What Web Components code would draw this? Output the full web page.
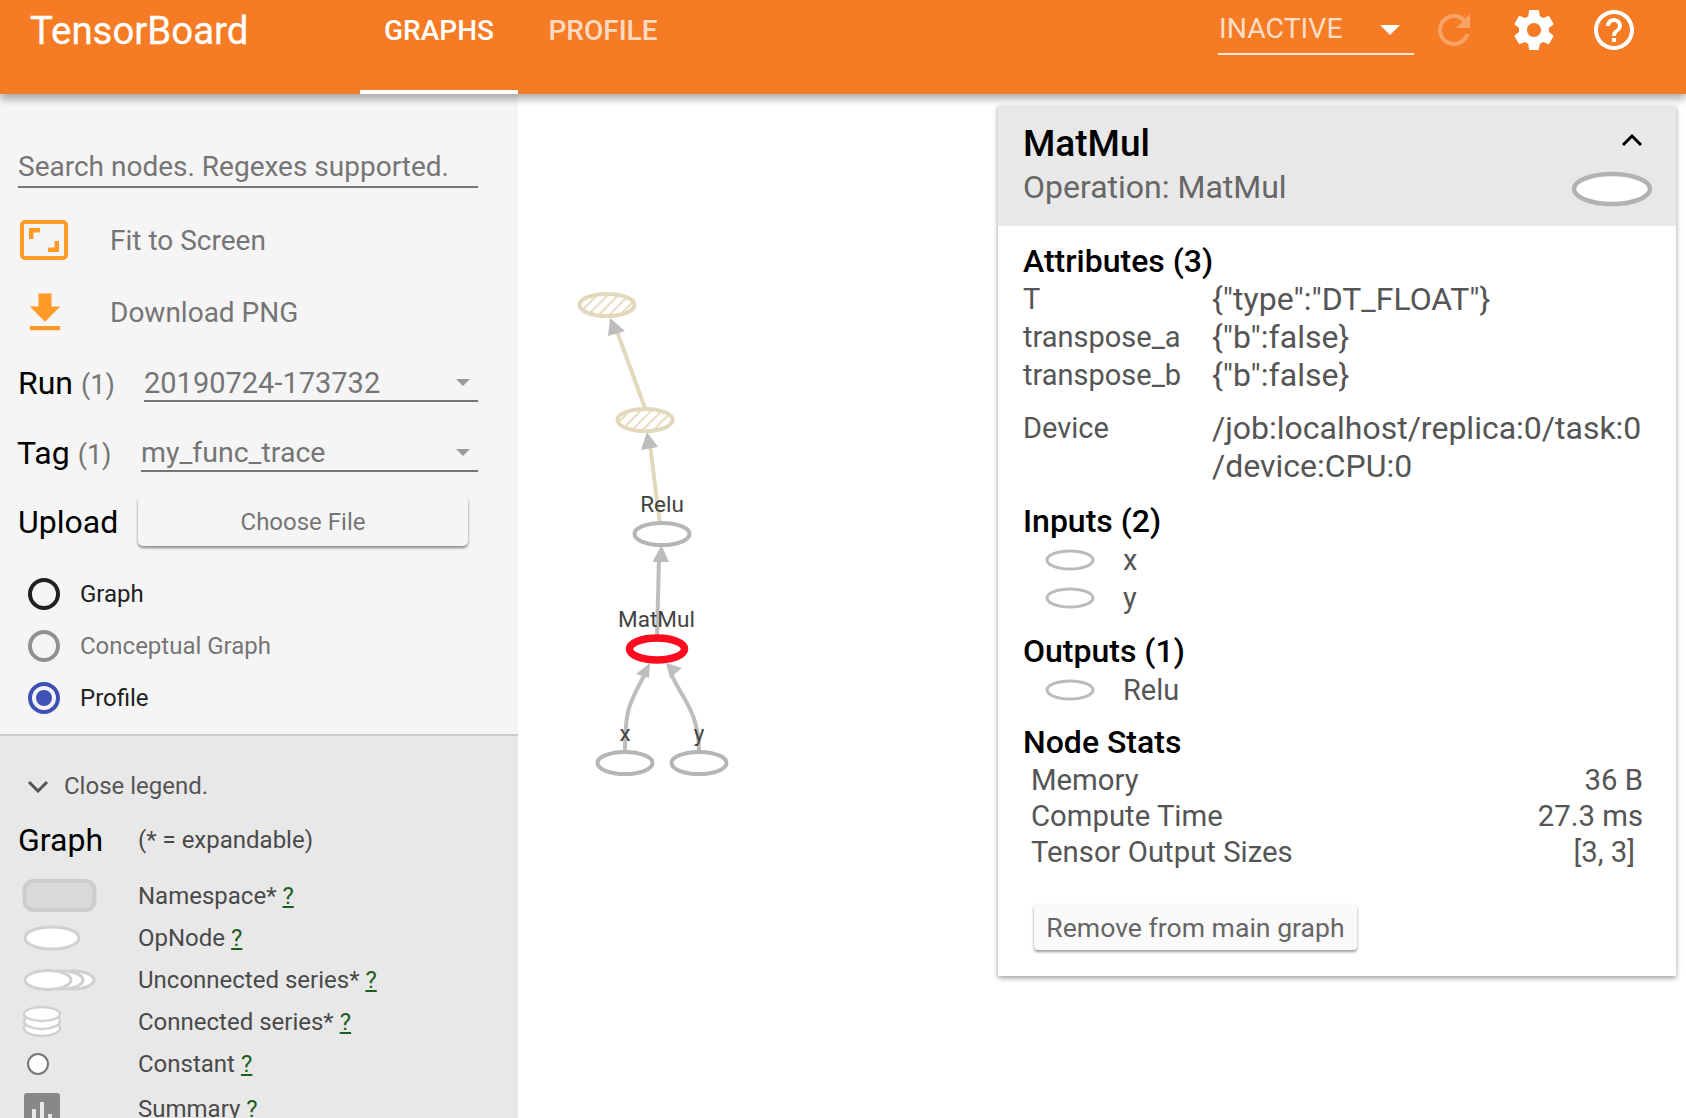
<!DOCTYPE html>
<html>
<head>
<meta charset="utf-8">
<title>TensorBoard</title>
<style>
  html, body { margin: 0; height: 100%; overflow: hidden; background: #fff; font-family: Roboto, "Liberation Sans", sans-serif; }
</style>
</head>
<body>
<tb-app></tb-app>
<script>
// shared material icon paths
const ICONS = {
  settings: 'M19.43 12.98c.04-.32.07-.64.07-.98s-.03-.66-.07-.98l2.11-1.65c.19-.15.24-.42.12-.64l-2-3.46c-.12-.22-.39-.3-.61-.22l-2.49 1c-.52-.4-1.08-.73-1.69-.98l-.38-2.65C14.46 2.18 14.25 2 14 2h-4c-.25 0-.46.18-.49.42l-.38 2.65c-.61.25-1.17.59-1.69.98l-2.49-1c-.23-.09-.49 0-.61.22l-2 3.46c-.13.22-.07.49.12.64l2.11 1.65c-.04.32-.07.65-.07.98s.03.66.07.98l-2.11 1.65c-.19.15-.24.42-.12.64l2 3.46c.12.22.39.3.61.22l2.49-1c.52.4 1.08.73 1.69.98l.38 2.65c.03.24.24.42.49.42h4c.25 0 .46-.18.49-.42l.38-2.65c.61-.25 1.17-.59 1.69-.98l2.49 1c.23.09.49 0 .61-.22l2-3.46c.12-.22.07-.49-.12-.64l-2.11-1.65zM12 15.5c-1.93 0-3.5-1.57-3.5-3.5s1.57-3.5 3.5-3.5 3.5 1.57 3.5 3.5-1.57 3.5-3.5 3.5z',
  help: 'M11 18h2v-2h-2v2zm1-16C6.48 2 2 6.48 2 12s4.48 10 10 10 10-4.48 10-10S17.52 2 12 2zm0 18c-4.41 0-8-3.59-8-8s3.59-8 8-8 8 3.59 8 8-3.59 8-8 8zm0-14c-2.21 0-4 1.79-4 4h2c0-1.1.9-2 2-2s2 .9 2 2c0 2-3 1.75-3 5h2c0-2.25 3-2.5 3-5 0-2.21-1.79-4-4-4z',
  refresh: 'M17.65 6.35C16.2 4.9 14.21 4 12 4c-4.42 0-7.99 3.58-7.99 8s3.57 8 7.99 8c3.73 0 6.84-2.55 7.73-6h-2.08c-.82 2.33-3.04 4-5.65 4-3.31 0-6-2.69-6-6s2.69-6 6-6c1.66 0 3.14.69 4.22 1.78L13 11h7V4l-2.35 2.35z',
  download: 'M19 9h-4V3H9v6H5l7 7 7-7zM5 18v2h14v-2H5z'
};

class TbHeader extends HTMLElement {
  constructor() {
    super();
    this.attachShadow({ mode: 'open' }).innerHTML = `
      <style>
        :host { display: flex; height: 94px; background: #f57c24; color: #fff; position: relative; z-index: 5; box-shadow: 0 5px 8px rgba(0,0,0,.32); }
        .title { font-size: 38.4px; font-weight: 400; -webkit-text-stroke: .3px #fff; margin: 9px 0 0 30px; width: 330px; line-height: 44px; }
        .tab { font-size: 28px; font-weight: 500; height: 94px; box-sizing: border-box; line-height: 61px; text-align: center; }
        .graphs { width: 158px; border-bottom: 4px solid #fff; }
        .profile { width: 158px; margin-left: 6px; color: rgba(255,255,255,.72); }
        .right { margin-left: auto; display: flex; align-items: flex-start; }
        .select { width: 196px; height: 55px; box-sizing: border-box; margin: 0 16px 0 0; border-bottom: 2px solid rgba(255,255,255,.85); display: flex; justify-content: space-between; color: rgba(255,255,255,.75); font-size: 28.4px; line-height: 57px; padding: 0 14px 0 1px; position: relative; }
        .select i { width: 0; height: 0; margin-top: 25px; border: 10px solid transparent; border-top: 10px solid #fff; border-bottom: 0; }
        svg { fill: #fff; display: block; }
        .refresh { width: 48px; height: 48px; margin: 6px 32px 0 0; opacity: .3; }
        .gear { width: 48px; height: 48px; margin: 6px 32px 0 0; }
        .help { width: 48px; height: 48px; margin: 6px 48px 0 0; }
      </style>
      <div class="title">TensorBoard</div>
      <div class="tab graphs">GRAPHS</div>
      <div class="tab profile">PROFILE</div>
      <div class="right">
        <div class="select"><span>INACTIVE</span><i></i></div>
        <svg class="refresh" viewBox="0 0 24 24"><path d="${ICONS.refresh}"/></svg>
        <svg class="gear" viewBox="0 0 24 24"><path d="${ICONS.settings}"/></svg>
        <svg class="help" viewBox="0 0 24 24"><path d="${ICONS.help}"/></svg>
      </div>`;
  }
}

class TbAction extends HTMLElement {
  constructor() {
    super();
    this.attachShadow({ mode: 'open' }).innerHTML = `
      <style>
        :host { display: flex; align-items: center; height: 71px; font-size: 28px; color: #757575; }
        .icon { width: 110px; padding-left: 18px; box-sizing: border-box; display: flex; }
        ::slotted(svg) { display: block; }
      </style>
      <div class="icon"><slot name="icon"></slot></div><slot></slot>`;
  }
}

class TbSelectRow extends HTMLElement {
  constructor() {
    super();
    const label = this.getAttribute('label');
    const count = this.getAttribute('count');
    this.attachShadow({ mode: 'open' }).innerHTML = `
      <style>
        :host { display: flex; height: 69px; padding: 0 40px 0 18px; align-items: center; }
        .label { font-size: 32px; color: #000; width: var(--label-width, 126px); white-space: nowrap; }
        .count { font-size: 27px; color: #757575; margin-left: 8px; }
        .select { flex: 1; height: 36px; border-bottom: 2px solid #757575; font-size: var(--value-size, 29px); color: #757575; display: flex; justify-content: space-between; line-height: 38px; padding-right: 8px; }
        i { width: 0; height: 0; margin-top: 15px; border: 7px solid transparent; border-top: 7px solid #9a9a9a; border-bottom: 0; }
      </style>
      <div class="label">${label}<span class="count">(${count})</span></div>
      <div class="select"><slot></slot><i></i></div>`;
  }
}

class TbRadio extends HTMLElement {
  constructor() {
    super();
    const state = this.getAttribute('state') || '';
    this.attachShadow({ mode: 'open' }).innerHTML = `
      <style>
        :host { display: flex; height: 52px; align-items: center; padding-left: 28px; font-size: 24px; color: #212121; }
        :host([state=off]) { color: #757575; }
        .dot { width: 32px; height: 32px; box-sizing: border-box; border-radius: 50%; border: 4px solid #212121; margin-right: 20px; position: relative; }
        :host([state=off]) .dot { border-color: #909090; }
        :host([state=on]) .dot { border-color: #3f51b5; }
        :host([state=on]) .dot::after { content: ''; position: absolute; inset: 4px; border-radius: 50%; background: #3f51b5; }
      </style>
      <div class="dot" data-state="${state}"></div><slot></slot>`;
  }
}

class TbLegendRow extends HTMLElement {
  constructor() {
    super();
    this.attachShadow({ mode: 'open' }).innerHTML = `
      <style>
        :host { display: flex; height: 42px; align-items: center; font-size: 24px; color: #4a4a4a; white-space: nowrap; }
        .glyph { width: 138px; flex: none; padding-left: 21px; box-sizing: border-box; }
        ::slotted(svg) { display: block; }
        u { color: #1b5e20; margin-left: 6px; }
      </style>
      <div class="glyph"><slot name="glyph"></slot></div><span><slot></slot></span><u>?</u>`;
  }
}

class TbLegend extends HTMLElement {
  constructor() {
    super();
    this.attachShadow({ mode: 'open' }).innerHTML = `
      <style>
        :host { display: block; flex: 1; background: #e8e8e8; border-top: 2px solid #ccc; overflow: hidden; }
        .toggle { display: flex; align-items: center; height: 50px; margin-top: 25px; padding-left: 27px; font-size: 24px; color: #555; }
        .toggle svg { width: 22px; height: 14px; margin-right: 15px; }
        .head { display: flex; align-items: center; height: 60px; margin-bottom: 5px; margin-top: -1px; font-size: 24px; color: #4a4a4a; }
        .head b { font-weight: 400; font-size: 32px; color: #000; width: 138px; padding-left: 18px; box-sizing: border-box; }
        .summary { margin-top: 3px; }
      </style>
      <div class="toggle"><svg viewBox="0 0 22 14"><path d="M2 3l9 9 9-9" fill="none" stroke="#555" stroke-width="3"/></svg>Close legend.</div>
      <div class="head"><b>Graph</b>(* = expandable)</div>
      <tb-legend-row>
        <svg slot="glyph" width="76" height="34" viewBox="0 0 76 34"><rect x="3.500" y="2" width="70" height="29" rx="9" fill="#d9d9d9" stroke="#cdcdcd" stroke-width="4"/></svg>
        Namespace*
      </tb-legend-row>
      <tb-legend-row>
        <svg slot="glyph" width="62" height="28" viewBox="0 0 62 28"><ellipse cx="31" cy="14" rx="27" ry="11" fill="#fff" stroke="#d0d0d0" stroke-width="3"/></svg>
        OpNode
      </tb-legend-row>
      <tb-legend-row>
        <svg slot="glyph" width="76" height="26" viewBox="0 0 76 26"><ellipse cx="52" cy="13" rx="21" ry="9" fill="#fff" stroke="#d0d0d0" stroke-width="3"/><ellipse cx="41" cy="13" rx="21" ry="9" fill="#fff" stroke="#d0d0d0" stroke-width="3"/><ellipse cx="27" cy="13" rx="23" ry="9.500" fill="#fff" stroke="#d0d0d0" stroke-width="3"/></svg>
        Unconnected series*
      </tb-legend-row>
      <tb-legend-row>
        <svg slot="glyph" width="42" height="34" viewBox="0 0 42 34"><ellipse cx="21" cy="23" rx="18" ry="8" fill="#fff" stroke="#d0d0d0" stroke-width="2.500"/><ellipse cx="21" cy="16" rx="18" ry="8" fill="#fff" stroke="#d0d0d0" stroke-width="2.500"/><ellipse cx="21" cy="9" rx="18" ry="7" fill="#fff" stroke="#d0d0d0" stroke-width="2.500"/></svg>
        Connected series*
      </tb-legend-row>
      <tb-legend-row>
        <svg slot="glyph" width="30" height="26" viewBox="0 0 30 26" style="margin-left:5px"><circle cx="12" cy="13" r="10" fill="#fff" stroke="#777" stroke-width="2"/></svg>
        Constant
      </tb-legend-row>
      <tb-legend-row class="summary">
        <svg slot="glyph" width="40" height="40" viewBox="0 0 40 40" style="margin:7px 0 0 3px"><rect x="0" y="0" width="36" height="36" rx="3" fill="#888"/><path d="M8 36V16h4v20zM16 36V9h4v27zM24 36V21h4v15z" fill="#e8e8e8"/></svg>
        Summary
      </tb-legend-row>`;
  }
}

class TbSidebar extends HTMLElement {
  constructor() {
    super();
    this.attachShadow({ mode: 'open' }).innerHTML = `
      <style>
        :host { display: flex; flex-direction: column; width: 518px; flex: none; height: 100%; background: #f5f5f5; overflow: hidden; }
        .search { margin: 0 40px 17px 18px; height: 94px; box-sizing: border-box; border-bottom: 2px solid #757575; padding-top: 55px; font-size: 28px; color: #757575; line-height: 36px; white-space: nowrap; }
        .download { margin-top: 1px; }
        .tag { --label-width: 124px; --value-size: 28.5px; box-sizing: border-box; height: 70px; padding-top: 2px; margin-left: -1px; }
        .upload { display: flex; height: 68px; align-items: center; padding-left: 18px; }
        .upload span { font-size: 32px; color: #000; width: 120px; padding-top: 2px; }
        .file { width: 330px; height: 50px; background: #f5f5f5; border-radius: 5px; box-shadow: 0 2px 3px rgba(0,0,0,.45); font-size: 24px; color: #757575; text-align: center; line-height: 52px; }
        .radios { margin-top: 13px; height: 166px; }
      </style>
      <div class="search">Search nodes. Regexes supported.</div>
      <tb-action>
        <svg slot="icon" width="52" height="44" viewBox="0 0 52 44" style="margin-top:-1px"><rect x="4" y="4" width="44" height="36" rx="3" fill="none" stroke="#ff9a27" stroke-width="4"/><path d="M11 21V10h11v4.500h-6.500V21zM41 23v11H30v-4.500h6.500V23z" fill="#ff9a27"/></svg>
        Fit to Screen
      </tb-action>
      <tb-action class="download">
        <svg slot="icon" width="52" height="52" viewBox="0 0 24 24" style="margin-left:1px"><path d="${ICONS.download}" fill="#ff9a27"/></svg>
        Download PNG
      </tb-action>
      <tb-select-row label="Run" count="1">20190724-173732</tb-select-row>
      <tb-select-row class="tag" label="Tag" count="1">my_func_trace</tb-select-row>
      <div class="upload"><span>Upload</span><div class="file">Choose File</div></div>
      <div class="radios">
        <tb-radio>Graph</tb-radio>
        <tb-radio state="off">Conceptual Graph</tb-radio>
        <tb-radio state="on">Profile</tb-radio>
      </div>
      <tb-legend></tb-legend>`;
  }
}

class TbGraph extends HTMLElement {
  constructor() {
    super();
    this.attachShadow({ mode: 'open' }).innerHTML = `
      <style>
        :host { display: block; flex: 1; position: relative; overflow: hidden; }
        svg { position: absolute; left: 0; top: 0; }
        text { font-size: 22.5px; fill: #424242; text-anchor: middle; font-family: Roboto, sans-serif; }
      </style>
      <svg width="500" height="1024" viewBox="518 94 500 1024">
        <defs>
          <pattern id="hatch" width="7.500" height="10" patternUnits="userSpaceOnUse" patternTransform="rotate(45)">
            <rect width="7.500" height="10" fill="#fff"/><rect width="2" height="10" fill="#e6dcc2"/>
          </pattern>
        </defs>
        <g fill="none" stroke-width="4">
          <path d="M645 408L615 326" stroke="#e2d8bc"/>
          <path d="M660 524L650 445" stroke="#e2d8bc"/>
          <path d="M657 638L659 558" stroke="#bdbdbd"/>
          <path d="M625 752C625 712 628 705 645 674" stroke="#bdbdbd"/>
          <path d="M699 752C699 712 682 698 671 674" stroke="#bdbdbd"/>
        </g>
        <g fill="#bdbdbd">
          <path d="M610 318L625 331 608 336z"/>
          <path d="M647 432L658 447 641 450z"/>
          <path d="M661.500 545L669 562 652.500 562z"/>
          <path d="M650 663L649 678 636 674z"/>
          <path d="M666 663L682 668 670 678z"/>
        </g>
        <ellipse cx="607" cy="305" rx="27.500" ry="11" fill="url(#hatch)" stroke="#e2d8bc" stroke-width="4"/>
        <ellipse cx="645" cy="420" rx="27.500" ry="11" fill="url(#hatch)" stroke="#e2d8bc" stroke-width="4"/>
        <ellipse cx="662" cy="534" rx="27.500" ry="11" fill="#fff" stroke="#b5b5b5" stroke-width="4"/>
        <ellipse cx="657" cy="649" rx="27.500" ry="11" fill="#fff" stroke="#ff0a1e" stroke-width="7.500"/>
        <ellipse cx="625" cy="763" rx="27.500" ry="11" fill="#fff" stroke="#b5b5b5" stroke-width="4"/>
        <ellipse cx="699" cy="763" rx="27.500" ry="11" fill="#fff" stroke="#b5b5b5" stroke-width="4"/>
        <text x="662" y="512">Relu</text>
        <text x="656.500" y="627">MatMul</text>
        <text x="625" y="741">x</text>
        <text x="699" y="741">y</text>
      </svg>`;
  }
}

class TbCardHeading extends HTMLElement {
  constructor() {
    super();
    this.attachShadow({ mode: 'open' }).innerHTML = `
      <style>:host { display: block; font-size: 32px; font-weight: 500; color: #000; line-height: 38px; }</style><slot></slot>`;
  }
}

class TbOpRow extends HTMLElement {
  constructor() {
    super();
    this.attachShadow({ mode: 'open' }).innerHTML = `
      <style>
        :host { display: flex; align-items: center; height: 38px; font-size: 29px; color: #555; }
        svg { margin: 0 28px 0 22px; display: block; }
      </style>
      <svg width="50" height="22" viewBox="0 0 50 22"><ellipse cx="25" cy="11" rx="23" ry="9" fill="none" stroke="#bbb" stroke-width="3"/></svg><slot></slot>`;
  }
}

class TbNodeCard extends HTMLElement {
  constructor() {
    super();
    this.attachShadow({ mode: 'open' }).innerHTML = `
      <style>
        :host { display: block; position: absolute; left: 998px; top: 106px; width: 678px; height: 870px; background: #fff; box-shadow: 0 2px 5px rgba(0,0,0,.4); z-index: 2; color: #555; }
        header { height: 120px; background: #e8e8e8; position: relative; padding: 16px 0 0 25px; box-sizing: border-box; }
        h1 { margin: 0; font-size: 37px; font-weight: 500; color: #000; line-height: 44px; }
        .op { font-size: 32px; color: #666; line-height: 42px; margin-top: 0; }
        .chev { position: absolute; left: 623px; top: 26px; }
        .big { position: absolute; left: 573px; top: 64px; }
        main { padding: 16px 0 0 25px; font-size: 29px; }
        .attrs { display: grid; grid-template-columns: 189px 1fr; grid-auto-rows: 38px; line-height: 38px; white-space: nowrap; }
        .val { font-size: 32px; }
        .device { grid-row: span 2; line-height: 38px; font-size: 32px; }
        .device-row { margin-top: 15px; }
        .inputs { margin-top: 17px; margin-bottom: 1px; }
        .outputs { margin-top: 15px; margin-bottom: 1px; }
        .stats { margin-top: 14px; margin-bottom: 1px; }
        .stat { display: flex; justify-content: space-between; height: 36px; line-height: 36px; font-size: 29.3px; padding: 0 33px 0 8px; }
        .stat.short { padding-right: 41px; }
        button { display: block; margin: 34px 0 0 11px; width: 323px; height: 46px; border: 0; border-radius: 4px; background: #fafafa; box-shadow: 0 2px 3px rgba(0,0,0,.4); font: 26.6px Roboto, sans-serif; color: #666; padding: 0; }
      </style>
      <header>
        <h1>MatMul</h1>
        <div class="op">Operation: MatMul</div>
        <svg class="chev" width="22" height="15" viewBox="0 0 22 15"><path d="M2 13l9-9 9 9" fill="none" stroke="#000" stroke-width="3"/></svg>
        <svg class="big" width="82" height="38" viewBox="0 0 82 38"><ellipse cx="41" cy="19" rx="38" ry="15" fill="#fff" stroke="#b2b2b2" stroke-width="4.500"/></svg>
      </header>
      <main>
        <tb-card-heading>Attributes (3)</tb-card-heading>
        <div class="attrs">
          <span>T</span><span class="val">{"type":"DT_FLOAT"}</span>
          <span>transpose_a</span><span class="val">{"b":false}</span>
          <span>transpose_b</span><span class="val">{"b":false}</span>
        </div>
        <div class="attrs device-row">
          <span>Device</span><span class="device">/job:localhost/replica:0/task:0<br>/device:CPU:0</span>
        </div>
        <tb-card-heading class="inputs">Inputs (2)</tb-card-heading>
        <tb-op-row>x</tb-op-row>
        <tb-op-row>y</tb-op-row>
        <tb-card-heading class="outputs">Outputs (1)</tb-card-heading>
        <tb-op-row>Relu</tb-op-row>
        <tb-card-heading class="stats">Node Stats</tb-card-heading>
        <div class="stat"><span>Memory</span><span>36 B</span></div>
        <div class="stat"><span>Compute Time</span><span>27.3 ms</span></div>
        <div class="stat short"><span>Tensor Output Sizes</span><span>[3, 3]</span></div>
        <button>Remove from main graph</button>
      </main>`;
  }
}

class TbApp extends HTMLElement {
  constructor() {
    super();
    this.attachShadow({ mode: 'open' }).innerHTML = `
      <style>
        :host { display: flex; flex-direction: column; height: 1118px; position: relative; overflow: hidden; }
        .content { display: flex; flex: 1; min-height: 0; }
      </style>
      <tb-header></tb-header>
      <div class="content">
        <tb-sidebar></tb-sidebar>
        <tb-graph></tb-graph>
      </div>
      <tb-node-card></tb-node-card>`;
  }
}

customElements.define('tb-header', TbHeader);
customElements.define('tb-action', TbAction);
customElements.define('tb-select-row', TbSelectRow);
customElements.define('tb-radio', TbRadio);
customElements.define('tb-legend-row', TbLegendRow);
customElements.define('tb-legend', TbLegend);
customElements.define('tb-sidebar', TbSidebar);
customElements.define('tb-graph', TbGraph);
customElements.define('tb-card-heading', TbCardHeading);
customElements.define('tb-op-row', TbOpRow);
customElements.define('tb-node-card', TbNodeCard);
customElements.define('tb-app', TbApp);
</script>
</body>
</html>
